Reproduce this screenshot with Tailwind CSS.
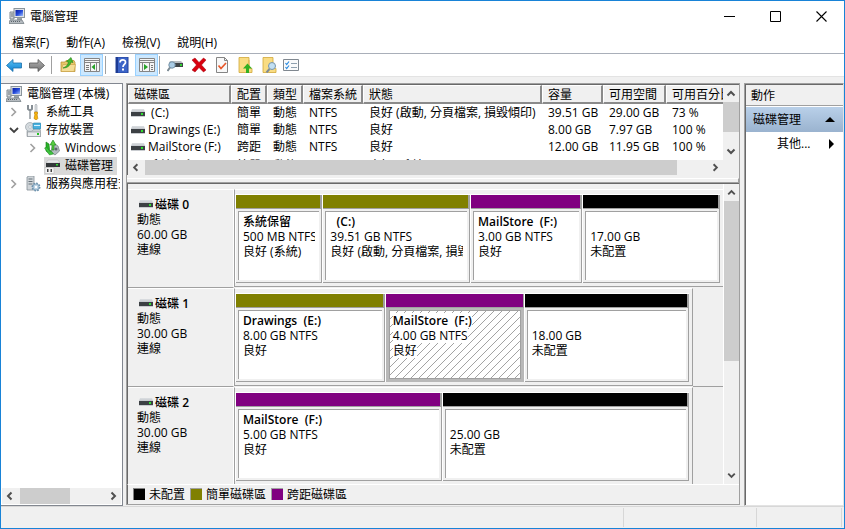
<!DOCTYPE html>
<html lang="zh-Hant">
<head>
<meta charset="utf-8">
<title>電腦管理</title>
<script src="https://cdn.jsdelivr.net/npm/@tailwindcss/browser@4"></script>
</head>
<body class="h-screen overflow-hidden bg-[#f0f0f0] font-['Open_Sans','Noto_Sans_CJK_TC',sans-serif] text-[12px] leading-[15px] text-black">
<svg class="absolute size-0" aria-hidden="true">
  <linearGradient id="gDrive" x1="0" y1="0" x2="0" y2="1"><stop offset="0" stop-color="#dcdfe2"/><stop offset="1" stop-color="#c3c7cc"/></linearGradient>
  <linearGradient id="gBlue" x1="0" y1="0" x2="0" y2="1"><stop offset="0" stop-color="#5cc3f5"/><stop offset="1" stop-color="#0c7fd0"/></linearGradient>
  <linearGradient id="gGray" x1="0" y1="0" x2="0" y2="1"><stop offset="0" stop-color="#b4b4b4"/><stop offset="1" stop-color="#707070"/></linearGradient>
  <linearGradient id="gScreen" x1="0" y1="0" x2="1" y2="1"><stop offset="0" stop-color="#0a1f9c"/><stop offset=".5" stop-color="#2348d8"/><stop offset="1" stop-color="#9fc0ff"/></linearGradient>
  <symbol id="drive" viewBox="0 0 14 8"><path d="M1 0h12l1 3H0z" fill="url(#gDrive)"/><rect y="3" width="14" height="4" fill="#3c4044"/><rect y="7" width="14" height="1" fill="#c9ccd0"/><rect x="10" y="4" width="2" height="2" fill="#2fe02f"/></symbol>
  <symbol id="computer" viewBox="0 0 16 16"><path d="M1 4h4v7H1z" fill="#d3d7da" stroke="#7e8890"/><path d="M2 6h2M2 8h2" stroke="#69737b"/><rect x="5" y="0.500" width="10.500" height="9" fill="#dfe3e6" stroke="#8b959c"/><rect x="6.500" y="2" width="7.500" height="6" fill="url(#gScreen)"/><path d="M8 10h5v2H8z" fill="#99a2a8"/><path d="M1 12h12l2 3.500H0z" fill="#b5bbc0" stroke="#6b757c" stroke-width=".7"/><path d="M2 13.500h10" stroke="#5b646b" stroke-dasharray="1 1"/></symbol>
  <symbol id="tools" viewBox="0 0 16 16"><path d="M3 1v4l2 1.500L7 5V1M5 6v9" stroke="#868e94" stroke-width="2" fill="none"/><path d="M5 7v8" stroke="#e4e7e9" stroke-width=".8"/><path d="M11 0l1 1v7h-2V1z" fill="#dfe2e4" stroke="#8a9298" stroke-width=".5"/><path d="M9.500 8h3v2h-.5l.8 4.500-1.500 1.500L9 14.500 10 10h-.5z" fill="#f6b40e" stroke="#b87b00" stroke-width=".6"/></symbol>
  <symbol id="storage" viewBox="0 0 16 16"><path d="M2 9l2-3h10l2 3v5.500H2z" fill="#c8cdd1" stroke="#858c92" stroke-width=".6"/><rect x="2.500" y="10" width="13" height="4.500" fill="#e9ebed" stroke="#8d9499" stroke-width=".6"/><rect x="12" y="11" width="2" height="2" fill="#23c223"/><circle cx="5" cy="5" r="4.500" fill="#d4dade" stroke="#8a949b" stroke-width=".6"/><circle cx="5" cy="5" r="1.300" fill="#fff" stroke="#9aa4ab" stroke-width=".5"/><rect x="8" y="1" width="8" height="6" rx="1" fill="#49b1df" stroke="#267da5" stroke-width=".6"/><path d="M9 3.500h6" stroke="#d5f2ff"/></symbol>
  <symbol id="backup" viewBox="0 0 16 16"><path d="M9 3l5 3 1.500 5L11 15l-4-3z" fill="#b4bbc0" stroke="#747c82" stroke-width=".7"/><circle cx="12" cy="9" r="1.500" fill="#5e666c"/><path d="M2 2l3 2 1 10-4-3z" fill="#29b329" stroke="#107a10" stroke-width=".6"/><path d="M.5 8l2-1 4 5 0-2 3 4-4 1z" fill="#3fc43f" stroke="#107a10" stroke-width=".4"/><path d="M6 5l3-5 3 5h-2v5H8V5z" fill="#56cb40" stroke="#178317" stroke-width=".6"/></symbol>
  <symbol id="diskmgmt" viewBox="0 0 16 16"><path d="M4 2h10l2 3H2z" fill="#e6e8ea" stroke="#aaa" stroke-width=".4"/><rect x="2" y="5" width="14" height="4" fill="#34383b"/><rect x="12" y="6" width="2" height="1.500" fill="#32e032"/><rect x="1" y="9.500" width="9" height="6" fill="#f4f4f4" stroke="#bbb" stroke-width=".6"/><rect x="3" y="11" width="1.500" height="3" fill="#444"/><rect x="6.500" y="11" width="1.500" height="3" fill="#444"/></symbol>
  <symbol id="services" viewBox="0 0 16 16"><path d="M2 1l2-1h5v14H2z" fill="#d0d5d9" stroke="#859097" stroke-width=".8"/><path d="M3.500 3h4M3.500 5.500h4M3.500 8h4" stroke="#66727a"/><circle cx="11" cy="11" r="3.500" fill="#a9c6dd" stroke="#6c90ab" stroke-width="2" stroke-dasharray="1.600 1.100"/><circle cx="11" cy="11" r="3" fill="#b9d2e5" stroke="#7798b0" stroke-width=".6"/><circle cx="11" cy="11" r="1.200" fill="#fff"/></symbol>
  <symbol id="left" viewBox="0 0 16 16"><path d="M9.500 4.500L6 8l3.500 3.500" fill="none" stroke="#505050" stroke-width="2"/></symbol>
  <symbol id="right" viewBox="0 0 16 16"><path d="M6.500 4.500L10 8l-3.500 3.500" fill="none" stroke="#505050" stroke-width="2"/></symbol>
  <symbol id="up" viewBox="0 0 16 16"><path d="M4.500 10.500L8 7l3.500 3.500" fill="none" stroke="#505050" stroke-width="2"/></symbol>
  <symbol id="down" viewBox="0 0 16 16"><path d="M4.500 5.500L8 9l3.500-3.500" fill="none" stroke="#505050" stroke-width="2"/></symbol>
  <symbol id="closed" viewBox="0 0 10 10"><path d="M2.500 1L6.500 5l-4 4" fill="none" stroke="#a0a0a0" stroke-width="1.600"/></symbol>
  <symbol id="open" viewBox="0 0 10 10"><path d="M1 3L5 7l4-4" fill="none" stroke="#404040" stroke-width="1.800"/></symbol>
</svg>

<div class="flex h-full flex-col border border-[#1883d7]">
  <header class="flex h-[30px] shrink-0 items-center bg-white pl-2">
    <svg class="mr-[5px] size-4"><use href="#computer"/></svg>
    <h1 class="flex-1">電腦管理</h1>
    <button aria-label="最小化" class="flex h-full w-[46px] items-center justify-center"><svg class="size-[11px]" viewBox="0 0 11 11"><path d="M0 5.500h11" stroke="#000"/></svg></button>
    <button aria-label="最大化" class="flex h-full w-[46px] items-center justify-center"><svg class="size-[11px]" viewBox="0 0 11 11"><path d="M.5.5h10v10H.5z" fill="none" stroke="#000"/></svg></button>
    <button aria-label="關閉" class="flex h-full w-[46px] items-center justify-center"><svg class="size-[11px]" viewBox="0 0 11 11"><path d="M.5.5l10 10M10.500.5l-10 10" stroke="#000" stroke-width="1.100"/></svg></button>
  </header>

  <nav class="flex h-[23px] shrink-0 items-center gap-[17px] border-b border-[#a9afb9] bg-white pl-[11px]">
    <button>檔案(F)</button><button>動作(A)</button><button>檢視(V)</button><button>說明(H)</button>
  </nav>

  <div role="toolbar" class="flex h-[23px] shrink-0 items-center border-b border-[#e3e3e3] bg-white pl-[5px]">
    <button aria-label="上一頁" class="mr-[7px]"><svg class="block size-4" viewBox="0 0 16 16"><path d="M.5 8.500L7 2.500V6h8.500v5H7v3.500z" fill="url(#gBlue)" stroke="#1b6faa" stroke-width=".8"/></svg></button>
    <button aria-label="下一頁" class="mr-[6px]"><svg class="block size-4" viewBox="0 0 16 16"><path d="M15.500 8.500L9 2.500V6H.5v5H9v3.500z" fill="url(#gGray)" stroke="#555" stroke-width=".8"/></svg></button>
    <span class="mr-[8px] h-[18px] w-px bg-[#a0a0a0]"></span>
    <button aria-label="上移一層" class="mr-[4px]"><svg class="block size-4" viewBox="0 0 16 16"><path d="M1 5h4l1-1.500h8l1 2V14.500H1z" fill="#e9c66a" stroke="#b78c2d" stroke-width=".7"/><path d="M1 14.500l2-7h12.500l-1.500 7z" fill="#f4dc96" stroke="#c79f43" stroke-width=".6"/><path d="M3 11c3-1 5-3 5.500-6L6.500 4.500 11 .5l2 5-2-.5c-1 4-4 6-8 6z" fill="#46b92d" stroke="#25831a" stroke-width=".6"/></svg></button>
    <button aria-label="顯示主控台樹狀目錄" class="mr-[2px] flex h-[22px] w-[23px] items-center justify-center border border-[#99d1ff] bg-[#cce8ff]"><svg class="size-4" viewBox="0 0 16 16"><path d="M.5 1.500h15v13H.5z" fill="#f5f5f5" stroke="#858585"/><path d="M1 3.500h14M1 5.500h14M6.500 6v8M12.500 6v8" stroke="#858585"/><path d="M2 8.500h3M2 10.500h3M2 12.500h3" stroke="#777"/><path d="M11 7v6L7.500 10z" fill="#27a327"/></svg></button>
    <span class="mr-[8px] h-[18px] w-px bg-[#a0a0a0]"></span>
    <button aria-label="說明" class="mr-[5px]"><svg class="block size-4" viewBox="0 0 16 16"><path d="M2 0h12v16H2z" fill="#3c64c8" stroke="#22439a"/><path d="M2 0h2v16H2z" fill="#1d3b93"/><path d="M6 5.500C6 2 11.500 2 11.500 5.200 11.500 7.500 9 7.500 9 10" fill="none" stroke="#fff" stroke-width="1.700"/><path d="M8 11.500h2v2H8z" fill="#fff"/></svg></button>
    <button aria-label="顯示動作窗格" class="mr-px flex h-[22px] w-[23px] items-center justify-center border border-[#99d1ff] bg-[#cce8ff]"><svg class="size-4" viewBox="0 0 16 16"><path d="M.5 1.500h15v13H.5z" fill="#f5f5f5" stroke="#858585"/><path d="M1 3.500h14M1 5.500h14M3.500 6v8M10.500 6v8" stroke="#858585"/><path d="M12 8.500h2M12 10.500h2M12 12.500h2" stroke="#777"/><path d="M5 7v6l4-3z" fill="#27a327"/></svg></button>
    <span class="mr-[7px] h-[18px] w-px bg-[#a0a0a0]"></span>
    <button aria-label="重新掃描磁碟" class="mr-[8px]"><svg class="block size-4" viewBox="0 0 16 16"><path d="M3 4h11l2 2v4H2V6z" fill="#b9bdc1"/><path d="M6 6h10v4H6z" fill="#404548"/><path d="M13 7h2v2h-2z" fill="#32d332"/><circle cx="5" cy="8" r="3.200" fill="#a9cbe4" stroke="#7692a6"/><path d="M3 10.500L.5 14" stroke="#7a8992" stroke-width="2"/></svg></button>
    <button aria-label="刪除" class="mr-[7px]"><svg class="block size-4" viewBox="0 0 16 16"><path d="M1 3l3-2 4 4.500L12.500 1 15 3l-4.500 5 4.500 5-2.500 2L8 10.500 4 15l-3-2 4.500-5z" fill="#d9000e" stroke="#98000b" stroke-width=".5"/></svg></button>
    <button aria-label="內容" class="mr-[7px]"><svg class="block size-4" viewBox="0 0 16 16"><path d="M2.500.5h8l3 3v12h-11z" fill="#f8f8f8" stroke="#858585"/><path d="M10.500.5v3h3" fill="none" stroke="#858585"/><path d="M4.500 8.500l2.500 3 5-5.500" fill="none" stroke="#e8582a" stroke-width="1.700"/></svg></button>
    <button aria-label="開啟" class="mr-[8px]"><svg class="block size-4" viewBox="0 0 16 16"><path d="M2 .5h10v10l3 1v4H2z" fill="#f9dc82" stroke="#d1a739" stroke-width=".8"/><path d="M12 3v8" stroke="#dcb453"/><path d="M10.500 6.500l4.500 5h-3V16H9v-4.500H6z" fill="#32b022"/></svg></button>
    <button aria-label="瀏覽" class="mr-[6px]"><svg class="block size-4" viewBox="0 0 16 16"><path d="M2 .5h10v10l3 1v4H2z" fill="#f9dc82" stroke="#d1a739" stroke-width=".8"/><circle cx="11" cy="9" r="3.500" fill="#c2e0f4" stroke="#7895aa"/><path d="M8.500 12L5.500 15.500" stroke="#7d8b95" stroke-width="2"/></svg></button>
    <button aria-label="設定"><svg class="block size-4" viewBox="0 0 16 16"><path d="M.5 2.500h15v11H.5z" fill="#fafafa" stroke="#808890"/><path d="M8 6.500h6M8 10.500h6" stroke="#8fa0ae"/><path d="M2.500 6l1.200 1.500L6 4.500M2.500 10l1.200 1.500L6 8.500" fill="none" stroke="#2a8be0" stroke-width="1.200"/></svg></button>
  </div>

  <main class="flex min-h-0 flex-1 pt-[6px]">
    <aside class="mr-[3px] flex w-[122px] shrink-0 flex-col overflow-hidden border border-l-0 border-[#828790] bg-white">
      <ul class="mr-[2px] min-h-0 flex-1 overflow-hidden whitespace-nowrap pt-px leading-[18px]">
        <li><div class="flex items-center pl-[5px]"><svg class="mr-[5px] size-4 shrink-0"><use href="#computer"/></svg>電腦管理 (本機)</div>
          <ul>
            <li class="flex items-center pl-[8px]"><svg class="mr-[6px] size-[10px] shrink-0"><use href="#closed"/></svg><svg class="mr-[5px] size-4 shrink-0"><use href="#tools"/></svg>系統工具</li>
            <li><div class="flex items-center pl-[8px]"><svg class="mr-[6px] size-[10px] shrink-0"><use href="#open"/></svg><svg class="mr-[5px] size-4 shrink-0"><use href="#storage"/></svg>存放裝置</div>
              <ul class="pl-[27px]">
                <li class="flex items-center"><svg class="mr-[6px] size-[10px] shrink-0"><use href="#closed"/></svg><svg class="mr-[5px] size-4 shrink-0"><use href="#backup"/></svg>Windows Server Backup</li>
                <li class="flex items-center pl-4"><span class="flex items-center bg-[#d9d9d9] pr-1"><svg class="mr-[5px] size-4 shrink-0"><use href="#diskmgmt"/></svg>磁碟管理</span></li>
              </ul>
            </li>
            <li class="flex items-center pl-[8px]"><svg class="mr-[6px] size-[10px] shrink-0"><use href="#closed"/></svg><svg class="mr-[5px] size-4 shrink-0"><use href="#services"/></svg>服務與應用程式</li>
          </ul>
        </li>
      </ul>
      <div class="mx-px mb-px flex h-4 shrink-0 bg-[#f0f0f0]">
        <button aria-label="向左捲動"><svg class="block size-4"><use href="#left"/></svg></button>
        <span class="ml-[2px] w-[50px] bg-[#cdcdcd]"></span>
        <button aria-label="向右捲動" class="ml-auto"><svg class="block size-4"><use href="#right"/></svg></button>
      </div>
    </aside>

    <div class="mb-px flex min-w-0 flex-1 flex-col border-r border-b border-l border-[#a0a0a0]">
      <section class="flex shrink-0 flex-col border-t border-[#a0a0a0]">
        <div class="border-t border-l border-[#696969]">
          <div class="flex h-[75px]">
            <div class="min-w-0 flex-1 overflow-hidden bg-white">
              <table class="w-[628px] table-fixed border-collapse whitespace-nowrap">
                <colgroup><col class="w-[103px]"><col class="w-[36px]"><col class="w-[36px]"><col class="w-[60px]"><col class="w-[179px]"><col class="w-[61px]"><col class="w-[63px]"><col class="w-[90px]"></colgroup>
                <thead>
                  <tr class="h-[19px] bg-[#f0f0f0] text-left leading-[17px] [&>th]:p-0 [&>th]:font-normal">
                    <th><div class="h-[19px] border border-r-2 border-b-2 border-[#8a8a8a] border-t-white border-l-white pl-[5px]">磁碟區</div></th>
                    <th><div class="h-[19px] border border-r-2 border-b-2 border-[#8a8a8a] border-t-white border-l-white pl-[5px]">配置</div></th>
                    <th><div class="h-[19px] border border-r-2 border-b-2 border-[#8a8a8a] border-t-white border-l-white pl-[5px]">類型</div></th>
                    <th><div class="h-[19px] border border-r-2 border-b-2 border-[#8a8a8a] border-t-white border-l-white pl-[5px]">檔案系統</div></th>
                    <th><div class="h-[19px] border border-r-2 border-b-2 border-[#8a8a8a] border-t-white border-l-white pl-[5px]">狀態</div></th>
                    <th><div class="h-[19px] border border-r-2 border-b-2 border-[#8a8a8a] border-t-white border-l-white pl-[5px]">容量</div></th>
                    <th><div class="h-[19px] border border-r-2 border-b-2 border-[#8a8a8a] border-t-white border-l-white pl-[5px]">可用空間</div></th>
                    <th><div class="h-[19px] border border-r-2 border-b-2 border-[#8a8a8a] border-t-white border-l-white pl-[5px]">可用百分比</div></th>
                  </tr>
                </thead>
                <tbody class="leading-[17px] [&_td]:p-0 [&_td]:pl-[6px]">
                  <tr><td><div class="-ml-[3px] flex items-center"><svg class="mr-[3px] h-2 w-[14px]"><use href="#drive"/></svg>&nbsp;(C:)</div></td><td>簡單</td><td>動態</td><td>NTFS</td><td>良好 (啟動, 分頁檔案, 損毀傾印)</td><td>39.51 GB</td><td>29.00 GB</td><td>73 %</td></tr>
                  <tr><td><div class="-ml-[3px] flex items-center"><svg class="mr-[3px] h-2 w-[14px]"><use href="#drive"/></svg>Drawings (E:)</div></td><td>簡單</td><td>動態</td><td>NTFS</td><td>良好</td><td>8.00 GB</td><td>7.97 GB</td><td>100 %</td></tr>
                  <tr><td><div class="-ml-[3px] flex items-center"><svg class="mr-[3px] h-2 w-[14px]"><use href="#drive"/></svg>MailStore (F:)</div></td><td>跨距</td><td>動態</td><td>NTFS</td><td>良好</td><td>12.00 GB</td><td>11.95 GB</td><td>100 %</td></tr>
                  <tr class="leading-[21px]"><td><div class="-ml-[3px] flex items-center"><svg class="mr-[3px] h-2 w-[14px]"><use href="#drive"/></svg>系統保留</div></td><td>簡單</td><td>動態</td><td>NTFS</td><td>良好 (系統)</td><td>500 MB</td><td>465 MB</td><td>93 %</td></tr>
                </tbody>
              </table>
            </div>
            <div class="flex w-4 shrink-0 flex-col bg-[#f0f0f0]">
              <button aria-label="清單向上捲動"><svg class="block size-4"><use href="#up"/></svg></button>
              <span class="mt-px h-[30px] bg-[#cdcdcd]"></span>
              <button aria-label="清單向下捲動" class="mt-auto"><svg class="block size-4"><use href="#down"/></svg></button>
            </div>
          </div>
          <div class="mr-4 flex h-[15px]">
            <button aria-label="清單向左捲動"><svg class="block h-[15px] w-4"><use href="#left"/></svg></button>
            <span class="ml-px flex-1 bg-[#cdcdcd]"></span>
            <button aria-label="清單向右捲動" class="ml-[30px]"><svg class="block h-[15px] w-4"><use href="#right"/></svg></button>
          </div>
        </div>
        <div class="mt-[3px] h-[4px] border-t border-r border-t-white border-r-[#a0a0a0]"></div>
      </section>

      <section class="flex min-h-0 flex-1 flex-col border-t border-[#a0a0a0]">
        <div class="flex min-h-0 flex-1 border-t border-l border-[#696969]">
          <div class="min-w-0 flex-1 overflow-hidden pt-[5px]">
            <article class="flex h-[99px]">
              <div class="w-[106px] shrink-0 border-t border-r border-b border-t-white border-r-white border-b-[#a0a0a0] pt-[7px] pl-[9px]">
                <h2 class="flex items-start font-medium"><svg class="mt-[3px] mr-[2px] ml-[2px] h-2 w-[14px]"><use href="#drive"/></svg><span>磁碟 <b class="font-semibold">0</b></span></h2>
                <p>動態</p><p>60.00 GB</p><p>連線</p>
              </div>
              <div class="mb-px flex min-w-0 flex-1 border-t border-b border-l border-[#a0a0a0] border-t-white pt-[4px] pb-[3px]">
                <div class="flex min-w-0 flex-[87] flex-col border-t border-l border-white"><div class="h-[14px] border-r-2 border-b border-[#a0a0a0] bg-[#808000]"></div><div class="flex-1 border-r border-b border-[#a0a0a0] p-[2px]"><div class="h-full overflow-hidden border-t border-l border-[#a0a0a0] bg-white px-[4px] pt-[2px]"><div class="overflow-hidden whitespace-pre"><p class="font-medium">系統保留</p><p>500 MB NTFS</p><p>良好 (系統)</p></div></div></div></div>
                <div class="flex min-w-0 flex-[148] flex-col border-t border-l border-white"><div class="h-[14px] border-r-2 border-b border-[#a0a0a0] bg-[#808000]"></div><div class="flex-1 border-r border-b border-[#a0a0a0] p-[2px]"><div class="h-full overflow-hidden border-t border-l border-[#a0a0a0] bg-white px-[4px] pt-[2px]"><div class="overflow-hidden whitespace-pre"><p class="font-semibold">  (C:)</p><p>39.51 GB NTFS</p><p>良好 (啟動, 分頁檔案, 損毀傾印)</p></div></div></div></div>
                <div class="flex min-w-0 flex-[112] flex-col border-t border-l border-white"><div class="h-[14px] border-r-2 border-b border-[#a0a0a0] bg-[#800080]"></div><div class="flex-1 border-r border-b border-[#a0a0a0] p-[2px]"><div class="h-full overflow-hidden border-t border-l border-[#a0a0a0] bg-white px-[4px] pt-[2px]"><div class="overflow-hidden whitespace-pre"><p class="font-semibold">MailStore  (F:)</p><p>3.00 GB NTFS</p><p>良好</p></div></div></div></div>
                <div class="flex min-w-0 flex-[138] flex-col border-t border-l border-white"><div class="h-[14px] border-r-2 border-b border-[#a0a0a0] bg-black"></div><div class="flex-1 border-r border-b border-[#a0a0a0] p-[2px]"><div class="h-full overflow-hidden border-t border-l border-[#a0a0a0] bg-white px-[4px] pt-[17px]"><p>17.00 GB</p><p>未配置</p></div></div></div>
                <span class="w-[3px]"></span>
              </div>
            </article>
            <article class="flex h-[99px]">
              <div class="w-[106px] shrink-0 border-t border-r border-b border-t-white border-r-white border-b-[#a0a0a0] pt-[7px] pl-[9px]">
                <h2 class="flex items-start font-medium"><svg class="mt-[3px] mr-[2px] ml-[2px] h-2 w-[14px]"><use href="#drive"/></svg><span>磁碟 <b class="font-semibold">1</b></span></h2>
                <p>動態</p><p>30.00 GB</p><p>連線</p>
              </div>
              <div class="mb-px flex min-w-0 flex-[459] border border-[#a0a0a0] border-t-white pt-[4px] pr-[3px] pb-[3px]">
                <div class="flex min-w-0 flex-[150] flex-col border-t border-l border-white"><div class="h-[14px] border-r-2 border-b border-[#a0a0a0] bg-[#808000]"></div><div class="flex-1 border-r border-b border-[#a0a0a0] p-[2px]"><div class="h-full overflow-hidden border-t border-l border-[#a0a0a0] bg-white px-[4px] pt-[2px]"><div class="overflow-hidden whitespace-pre"><p class="font-semibold">Drawings  (E:)</p><p>8.00 GB NTFS</p><p>良好</p></div></div></div></div>
                <div class="flex min-w-0 flex-[139] flex-col border-t border-l border-white"><div class="h-[14px] border-r border-b border-[#a0a0a0] bg-[#800080]"></div><div class="flex-1 bg-[#b8b8b8] p-[3px] pt-[2px]"><div class="relative h-full overflow-hidden border border-[#a0a0a0] bg-white px-[3px] pt-[2px]"><svg class="absolute inset-0 size-full" aria-hidden="true"><pattern id="hatch" width="8" height="8" patternUnits="userSpaceOnUse"><path d="M-1 9L9-1M-1 1L1-1M7 9L9 7" stroke="#8c8c8c" stroke-width=".8"/></pattern><rect width="100%" height="100%" fill="url(#hatch)"/></svg><div class="relative flex flex-col items-start whitespace-pre"><p class="bg-white font-semibold">MailStore  (F:)</p><p class="bg-white">4.00 GB NTFS</p><p class="bg-white">良好</p></div></div></div></div>
                <div class="flex min-w-0 flex-[166] flex-col border-t border-l border-white"><div class="h-[14px] border-r-2 border-b border-[#a0a0a0] bg-black"></div><div class="flex-1 border-r border-b border-[#a0a0a0] p-[2px]"><div class="h-full overflow-hidden border-t border-l border-[#a0a0a0] bg-white px-[4px] pt-[17px]"><p>18.00 GB</p><p>未配置</p></div></div></div>
              </div>
              <span class="flex-[30] border-b border-[#a0a0a0]"></span>
            </article>
            <article class="flex h-[99px]">
              <div class="w-[106px] shrink-0 border-t border-r border-b border-t-white border-r-white border-b-[#a0a0a0] pt-[7px] pl-[9px]">
                <h2 class="flex items-start font-medium"><svg class="mt-[3px] mr-[2px] ml-[2px] h-2 w-[14px]"><use href="#drive"/></svg><span>磁碟 <b class="font-semibold">2</b></span></h2>
                <p>動態</p><p>30.00 GB</p><p>連線</p>
              </div>
              <div class="mb-px flex min-w-0 flex-[459] border border-[#a0a0a0] border-t-white pt-[4px] pr-[3px] pb-[3px]">
                <div class="flex min-w-0 flex-[207] flex-col border-t border-l border-white"><div class="h-[14px] border-r-2 border-b border-[#a0a0a0] bg-[#800080]"></div><div class="flex-1 border-r border-b border-[#a0a0a0] p-[2px]"><div class="h-full overflow-hidden border-t border-l border-[#a0a0a0] bg-white px-[4px] pt-[2px]"><div class="overflow-hidden whitespace-pre"><p class="font-semibold">MailStore  (F:)</p><p>5.00 GB NTFS</p><p>良好</p></div></div></div></div>
                <div class="flex min-w-0 flex-[248] flex-col border-t border-l border-white"><div class="h-[14px] border-r-2 border-b border-[#a0a0a0] bg-black"></div><div class="flex-1 border-r border-b border-[#a0a0a0] p-[2px]"><div class="h-full overflow-hidden border-t border-l border-[#a0a0a0] bg-white px-[4px] pt-[17px]"><p>25.00 GB</p><p>未配置</p></div></div></div>
              </div>
              <span class="flex-[30]"></span>
            </article>
          </div>
          <div class="flex w-4 shrink-0 flex-col border-l border-white">
            <button aria-label="磁碟向上捲動"><svg class="block h-4 w-[15px]"><use href="#up"/></svg></button>
            <span class="mt-px h-[160px] bg-[#cdcdcd]"></span>
            <button aria-label="磁碟向下捲動" class="mt-auto"><svg class="block h-4 w-[15px]"><use href="#down"/></svg></button>
          </div>
        </div>
        <footer class="flex h-[20px] shrink-0 items-center border-t border-l border-t-white border-l-[#696969] pb-px pl-[5px]">
          <span class="mr-[4px] size-3 border-t border-l border-[#808080] bg-black"></span>未配置
          <span class="mr-[4px] ml-[5px] size-3 border-t border-l border-[#a0a0a0] bg-[#808000]"></span>簡單磁碟區
          <span class="mr-[4px] ml-[5px] size-3 border-t border-l border-[#a0a0a0] bg-[#800080]"></span>跨距磁碟區
        </footer>
      </section>
    </div>

    <aside class="ml-[4px] w-[100px] shrink-0 border-t border-r border-b border-l border-[#a0a0a0] border-r-[#e3e3e3] border-b-[#e3e3e3] bg-white">
      <div class="h-full border-t border-l border-[#696969]">
        <h2 class="h-[21px] border-b border-[#a0a0a0] bg-[#f0f0f0] pt-[3px] pl-[5px]">動作</h2>
        <button class="mt-px flex h-[25px] w-full items-center justify-between bg-linear-to-b from-[#b9d0e9] to-[#9ab3cf] pr-[8px] pl-[7px]">磁碟管理<svg class="h-[5px] w-[10px]" viewBox="0 0 10 5"><path d="M5 0l5 5H0z"/></svg></button>
        <button class="flex h-[23px] w-full items-center justify-between pr-[9px] pl-[31px]">其他...<svg class="h-[10px] w-[5px]" viewBox="0 0 5 10"><path d="M0 0l5 5-5 5z"/></svg></button>
      </div>
    </aside>
  </main>

  <footer class="flex h-[22px] shrink-0 justify-end border-t border-[#d7d7d7] py-px pr-[2px]">
    <span class="w-[133px] border-l border-[#d7d7d7]"></span><span class="w-[86px] border-r border-l border-[#d7d7d7]"></span>
  </footer>
</div>
</body>
</html>
